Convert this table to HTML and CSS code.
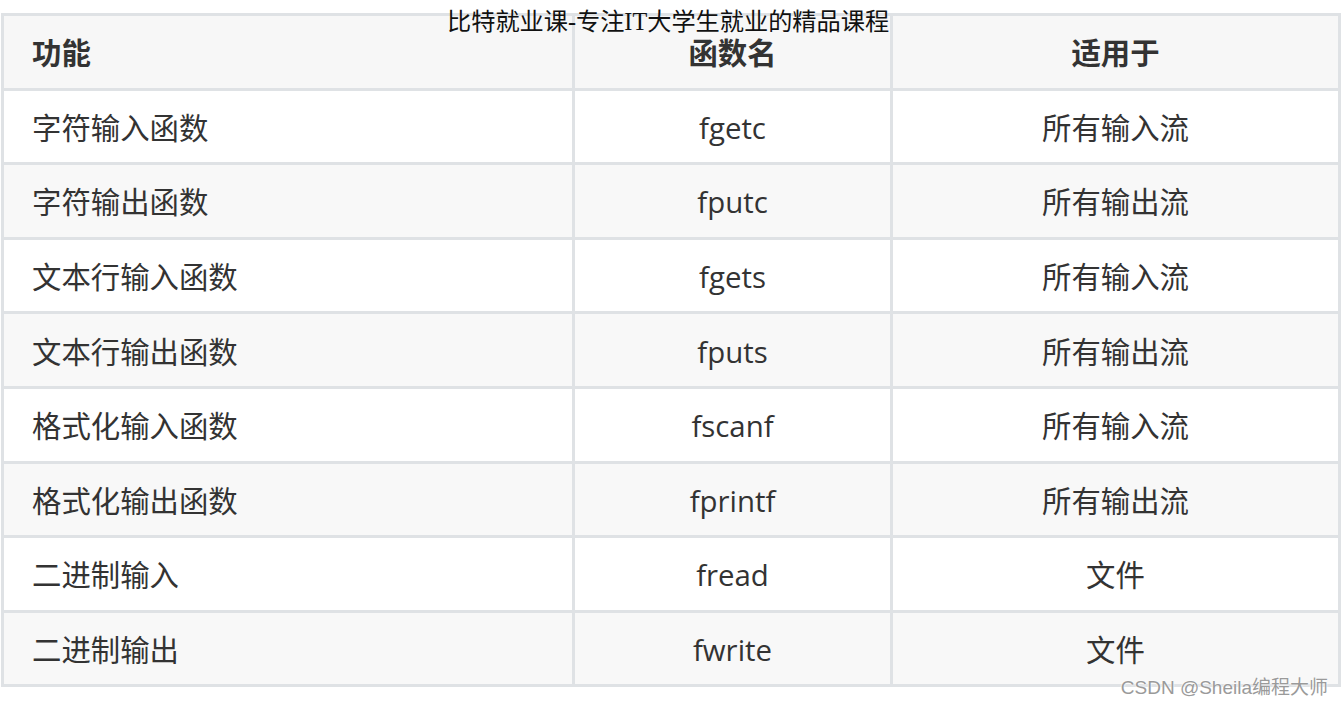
FILE: index.html
```html
<!DOCTYPE html>
<html lang="zh">
<head>
<meta charset="utf-8">
<title>文件读写函数</title>
<link rel="stylesheet" href="styles.css">
</head>
<body>
<div class="page">
  <div class="title">比特就业课-专注IT大学生就业的精品课程</div>
  <table class="fn-table">
    <colgroup>
      <col class="c1"><col class="c2"><col class="c3">
    </colgroup>
    <thead>
      <tr><th class="left">功能</th><th>函数名</th><th>适用于</th></tr>
    </thead>
    <tbody>
      <tr><td class="left">字符输入函数</td><td>fgetc</td><td>所有输入流</td></tr>
      <tr><td class="left">字符输出函数</td><td>fputc</td><td>所有输出流</td></tr>
      <tr><td class="left">文本行输入函数</td><td>fgets</td><td>所有输入流</td></tr>
      <tr><td class="left">文本行输出函数</td><td>fputs</td><td>所有输出流</td></tr>
      <tr><td class="left">格式化输入函数</td><td>fscanf</td><td>所有输入流</td></tr>
      <tr><td class="left">格式化输出函数</td><td>fprintf</td><td>所有输出流</td></tr>
      <tr><td class="left">二进制输入</td><td>fread</td><td>文件</td></tr>
      <tr><td class="left">二进制输出</td><td>fwrite</td><td>文件</td></tr>
    </tbody>
  </table>
  <div class="mark">CSDN @Sheila编程大师</div>
</div>
</body>
</html>
```
FILE: styles.css
```css
html, body {
  margin: 0;
  padding: 0;
  background: #fff;
}
.page {
  position: relative;
  width: 1344px;
  height: 707px;
  padding: 13px 0 0 1px;
  box-sizing: border-box;
}
.title {
  position: absolute;
  top: 6px;
  left: 447px;
  font-family: "Liberation Serif", "Noto Sans CJK SC", serif;
  font-size: 24.2px;
  line-height: 32px;
  color: #111;
  white-space: nowrap;
  z-index: 2;
}
.fn-table {
  border-collapse: collapse;
  width: 1337px;
  table-layout: fixed;
  font-family: "Open Sans", "Noto Sans CJK SC", sans-serif;
  font-size: 29.4px;
  color: #333;
}
.c1 { width: 571px; }
.c2 { width: 318px; }
.c3 { width: 448px; }
.fn-table th,
.fn-table td {
  border: 3px solid #dfe2e5;
  height: 74.6px;
  box-sizing: border-box;
  padding: 3px 10px 0;
  text-align: center;
  vertical-align: middle;
  line-height: 36px;
}
.fn-table th {
  font-weight: 700;
}
.fn-table .left {
  text-align: left;
  padding-left: 28px;
}
.fn-table thead tr {
  background: #f7f7f7;
}
.fn-table tbody tr:nth-child(even) {
  background: #f8f8f8;
}
.mark {
  position: absolute;
  right: 16px;
  top: 675px;
  font-family: "Liberation Sans", "Noto Sans CJK SC", sans-serif;
  font-size: 19px;
  line-height: 26px;
  color: #9a9a9a;
  text-shadow: 0 0 2px #fff, 0 0 2px #fff;
  white-space: nowrap;
}
```
